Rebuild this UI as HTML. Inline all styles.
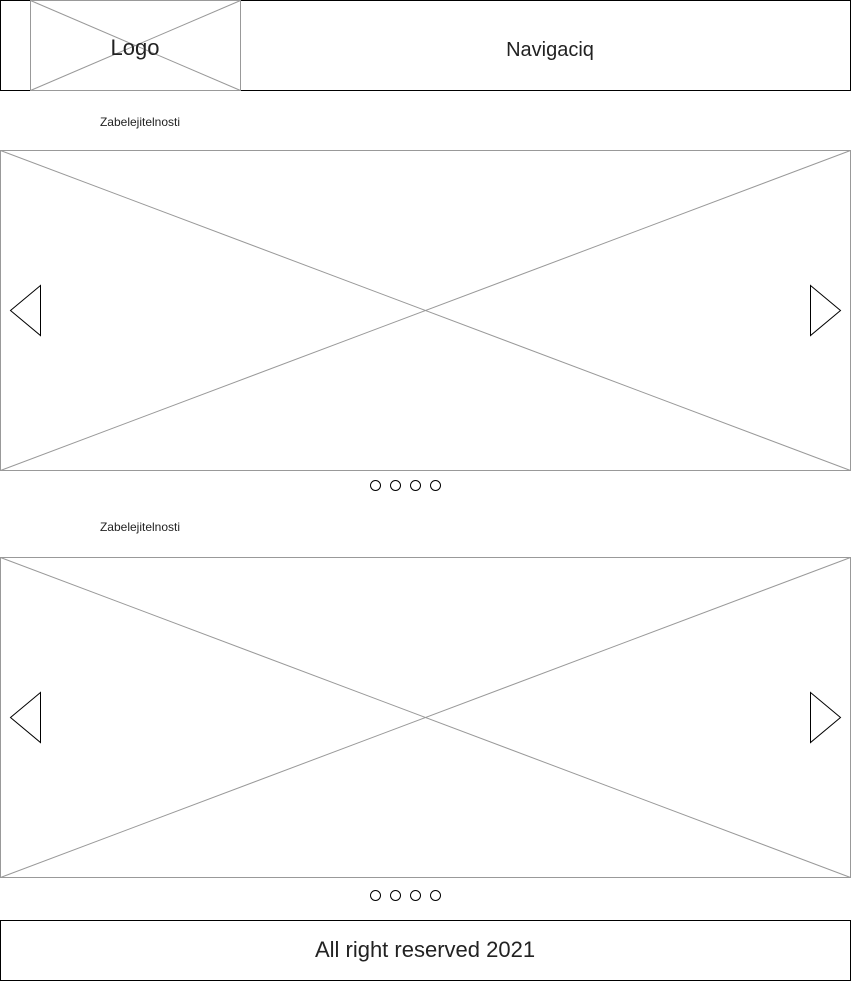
<!DOCTYPE html>
<html><head><meta charset="utf-8"><style>
html,body{margin:0;padding:0;background:#fff;width:851px;height:981px;overflow:hidden}
svg{display:block}
text{font-family:"Liberation Sans",Arial,sans-serif;fill:#222}
</style></head><body>
<svg width="851" height="981" viewBox="0 0 851 981" xmlns="http://www.w3.org/2000/svg">
<rect x="0.5" y="0.5" width="850" height="90" fill="none" stroke="#000"/>
<rect x="30.5" y="0.5" width="210" height="90" fill="#fff" stroke="#999"/>
<line x1="30.5" y1="0.5" x2="240.5" y2="90.5" stroke="#999"/>
<line x1="30.5" y1="90.5" x2="240.5" y2="0.5" stroke="#999"/>
<text x="135" y="55" font-size="22" text-anchor="middle">Logo</text>
<text x="550" y="56" font-size="20" text-anchor="middle">Navigaciq</text>

<text x="140" y="126" font-size="12" text-anchor="middle">Zabelejitelnosti</text>
<rect x="0.5" y="150.5" width="850" height="320" fill="none" stroke="#999"/>
<line x1="0.5" y1="150.5" x2="850.5" y2="470.5" stroke="#999"/>
<line x1="0.5" y1="470.5" x2="850.5" y2="150.5" stroke="#999"/>
<polygon points="40.5,285.5 10.5,310.5 40.5,335.5" fill="#fff" stroke="#000"/>
<polygon points="810.5,285.5 840.5,310.5 810.5,335.5" fill="#fff" stroke="#000"/>
<g fill="none" stroke="#000"><circle cx="375.5" cy="485.5" r="5"/><circle cx="395.5" cy="485.5" r="5"/><circle cx="415.5" cy="485.5" r="5"/><circle cx="435.5" cy="485.5" r="5"/></g>

<text x="140" y="531" font-size="12" text-anchor="middle">Zabelejitelnosti</text>
<rect x="0.5" y="557.5" width="850" height="320" fill="none" stroke="#999"/>
<line x1="0.5" y1="557.5" x2="850.5" y2="877.5" stroke="#999"/>
<line x1="0.5" y1="877.5" x2="850.5" y2="557.5" stroke="#999"/>
<polygon points="40.5,692.5 10.5,717.5 40.5,742.5" fill="#fff" stroke="#000"/>
<polygon points="810.5,692.5 840.5,717.5 810.5,742.5" fill="#fff" stroke="#000"/>
<g fill="none" stroke="#000"><circle cx="375.5" cy="895.5" r="5"/><circle cx="395.5" cy="895.5" r="5"/><circle cx="415.5" cy="895.5" r="5"/><circle cx="435.5" cy="895.5" r="5"/></g>

<rect x="0.5" y="920.5" width="850" height="60" fill="none" stroke="#000"/>
<text x="425" y="957" font-size="22" text-anchor="middle">All right reserved 2021</text>
</svg>
</body></html>
